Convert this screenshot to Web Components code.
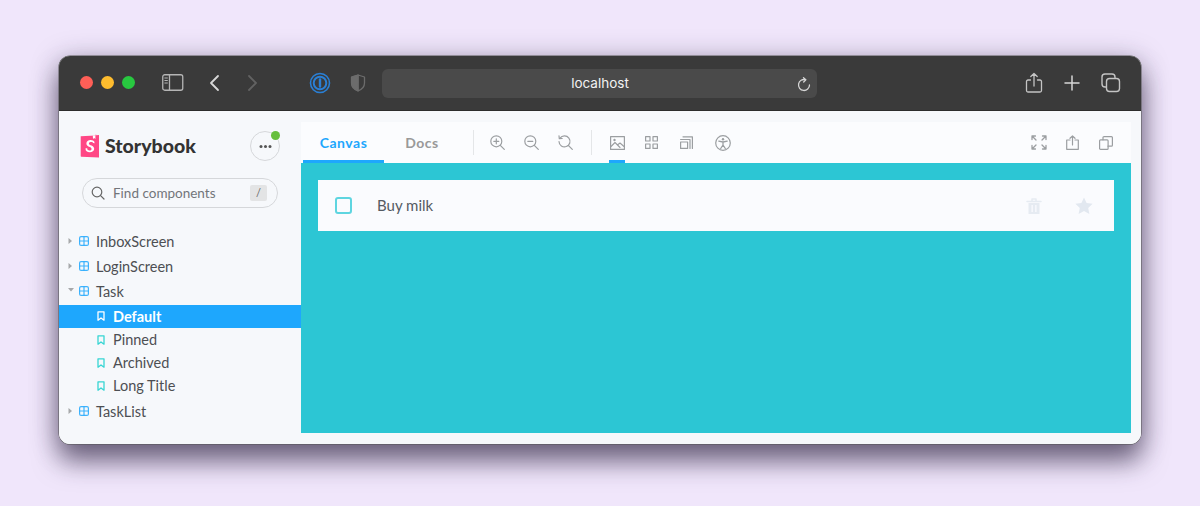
<!DOCTYPE html>
<html lang="en"><head><meta charset="utf-8"><title>Storybook</title>
<style>
html,body{margin:0;height:506px;overflow:hidden}
body{background:#f0e6fb;font-family:Lato,"Open Sans","Liberation Sans",sans-serif;padding:56px 59px 0;box-sizing:border-box}
</style></head><body>
<browser-window>
  <browser-bar slot="bar"></browser-bar>
  <sb-sidebar slot="side"></sb-sidebar>
  <sb-main slot="main"></sb-main>
</browser-window>
<script>
function el(name,css,html){
  customElements.define(name,class extends HTMLElement{
    constructor(){super();this.attachShadow({mode:'open'}).innerHTML='<style>'+css+'</style>'+(typeof html==='function'?html(this):html);}
  });
}
const I=(w,h,vb,body,extra='')=>`<svg width="${w}" height="${h}" viewBox="${vb}" fill="none" stroke-linecap="round" stroke-linejoin="round" ${extra}>${body}</svg>`;

el('browser-window',`
:host{display:block;width:1082px;height:388px;border-radius:11px;overflow:hidden;background:#f6f8fb;
 box-shadow:0 0 0 .5px #555,0 18px 26px rgba(40,30,60,.55),0 4px 28px rgba(40,30,60,.36)}
.b{display:flex;height:333px}
::slotted([slot=side]){flex:0 0 242px}
::slotted([slot=main]){flex:1}
`,`<slot name="bar"></slot><div class="b"><slot name="side"></slot><slot name="main"></slot></div>`);

el('browser-bar',`
:host{display:flex;align-items:center;height:55px;box-sizing:border-box;background:#3a3a3a;padding:0 20px 1px 21px;border-bottom:1px solid #2c2c2c}
.l{display:flex;gap:8px;margin-right:27px}
.l i{width:13px;height:13px;border-radius:50%;display:block}
svg{display:block;flex:none}
.url{width:436px;height:29px;border-radius:6px;background:#4a4a4a;display:flex;align-items:center;justify-content:center;position:relative;
 color:#f2f2f2;font:13.500px/31px Inter,"Liberation Sans",sans-serif;margin:1px 208px 0 16px}
.url svg{position:absolute;right:6px;top:8px}
`,`<div class="l"><i style="background:#ff5f57"></i><i style="background:#febc2e"></i><i style="background:#28c840"></i></div>
${I(22,17,'0 0 22 17','<rect x=".75" y=".75" width="20" height="15.500" rx="2" stroke="#b5b5b5" stroke-width="1.300"/><path d="M7.500 1v15" stroke="#b5b5b5" stroke-width="1.300"/><path d="M2.800 4h2.600M2.800 6.500h2.600M2.800 9h2.600" stroke="#b5b5b5" stroke-width="1"/>')}
${I(12,18,'0 0 12 18','<path d="M10 2 3 9l7 7" stroke="#d8d8d8" stroke-width="1.800"/>','style="margin-left:24px"')}
${I(12,18,'0 0 12 18','<path d="M2 2l7 7-7 7" stroke="#626262" stroke-width="1.800"/>','style="margin-left:27px"')}
${I(22,22,'0 0 22 22','<circle cx="11" cy="11" r="9.500" stroke="#2a7fd4" stroke-width="1.600"/><circle cx="11" cy="11" r="6.300" stroke="#2a7fd4" stroke-width="2"/><path d="M11 7.500v7" stroke="#2a7fd4" stroke-width="2.400"/>','style="margin-left:50px"')}
${I(16,18,'0 0 16 18','<path d="M8 1 1.500 3v6c0 4 3 6.700 6.500 8 3.500-1.300 6.500-4 6.500-8V3z" stroke="#6c6c6c" stroke-width="1.300"/><path d="M8 1 1.500 3v6c0 4 3 6.700 6.500 8z" fill="#6c6c6c" stroke="#6c6c6c"/>','style="margin-left:19px"')}
<div class="url"><span style="margin-left:1px">localhost</span>${I(14,15,'0 0 14 15','<path d="M8.500 2.700A5.500 5.500 0 1 0 12.500 8" stroke="#d5d5d5" stroke-width="1.300"/><path d="M6.500 .8 8.800 2.800 6.700 5" stroke="#d5d5d5" stroke-width="1.300"/>')}</div>
${I(18,22,'0 0 18 22','<path d="M5.500 8H3a1.500 1.500 0 0 0-1.500 1.500v9A1.500 1.500 0 0 0 3 20h12a1.500 1.500 0 0 0 1.500-1.500v-9A1.500 1.500 0 0 0 15 8h-2.500M9 14V1.500M5.800 4.500 9 1.500l3.200 3" stroke="#c4c4c4" stroke-width="1.300"/>')}
${I(16,16,'0 0 16 16','<path d="M8 1v14M1 8h14" stroke="#d6d6d6" stroke-width="1.500"/>','style="margin-left:21px"')}
${I(20,20,'0 0 20 20','<rect x="1" y="1" width="13" height="13" rx="3" stroke="#c4c4c4" stroke-width="1.400"/><rect x="5.500" y="5.500" width="13" height="13" rx="3" fill="#3a3a3a" stroke="#c4c4c4" stroke-width="1.400"/>','style="margin-left:21px"')}
`);

el('sb-sidebar',`
:host{display:block;box-sizing:border-box;padding:20px 0 0;background:#f6f8fb;color:#4d4f53}
.top{display:flex;align-items:center;padding:0 21px 0 21px;height:30px}
.brand{font:900 19.500px/30px Lato,sans-serif;color:#333;margin-left:6px}
.menu{margin-left:auto;width:30px;height:30px;box-sizing:border-box;border:1px solid #d5d7da;border-radius:50%;position:relative;display:flex;align-items:center;justify-content:center}
.menu b{position:absolute;top:-1px;right:-1px;width:9px;height:9px;border-radius:50%;background:#66bf3c}
.search{margin:17px 23px 0;height:30px;box-sizing:border-box;border:1px solid #d5d7da;border-radius:15px;display:flex;align-items:center;padding:0 10px 0 8px;font-size:13.500px;color:#72757a;gap:8px}
.search kbd{margin-left:auto;width:17px;height:16px;background:#e3e4e5;border-radius:2px;font:11px/16px Lato,sans-serif;text-align:center;color:#666}
.tree{margin-top:20px;display:block}
`,`<div class="top">
${I(19,24,'0 0 19 24','<path d="M.7 2.300 15.500 1.400 16 0l.200 1.300L19 1.100V23.400L1.300 22.700a.7.700 0 0 1-.6-.7z" fill="#ff4785"/><path d="M13.200 9c0-1-1.900-1.200-2.700-1.100-1 .1-1.600.7-1.600 1.500 0 2.200 5.300 1.500 5.300 5.400 0 2.300-2 3.500-4.400 3.500-2.600 0-4.400-1.100-4.300-3.700.1-.4 1.700-.4 1.800 0 0 1.500.9 2 2.500 1.900 1.100-.1 1.800-.7 1.800-1.600 0-2.300-5.200-1.900-5.200-5.400 0-2.300 1.800-3.500 4.100-3.500 2.300 0 4.300.9 4.100 3.300z" fill="#fff"/><path d="M12.800 1.600 13 5l1.200-.9 1.200.9V1.400z" fill="#fff"/>','style="flex:none"')}
<span class="brand">Storybook</span>
<div class="menu">${I(13,3,'0 0 13 3','<circle cx="2" cy="1.500" r="1.500" fill="#555"/><circle cx="6.500" cy="1.500" r="1.500" fill="#555"/><circle cx="11" cy="1.500" r="1.500" fill="#555"/>')}<b></b></div></div>
<div class="search">${I(14,14,'0 0 14 14','<circle cx="6" cy="6" r="4.800" stroke="#666" stroke-width="1.200"/><path d="M9.600 9.600 13 13" stroke="#666" stroke-width="1.200"/>')}<span>Find components</span><kbd>/</kbd></div>
<div class="tree">
<tree-row kind="comp" arrow="r">InboxScreen</tree-row>
<tree-row kind="comp" arrow="r">LoginScreen</tree-row>
<tree-row kind="comp" arrow="d">Task</tree-row>
<tree-row kind="story" selected>Default</tree-row>
<tree-row kind="story">Pinned</tree-row>
<tree-row kind="story">Archived</tree-row>
<tree-row kind="story" last>Long Title</tree-row>
<tree-row kind="comp" arrow="r">TaskList</tree-row>
</div>`);

el('tree-row',`
:host{display:flex;align-items:center;height:25px;font-size:14.500px;color:#4d4f53;padding-left:9px;box-sizing:border-box}
:host([kind=comp]){padding-top:1px}
:host([kind=story]){height:23px;padding-left:38px}
:host([selected]){background:#1ea7fd;color:#fff;font-weight:700;margin-top:1.500px;margin-bottom:.500px}
:host([last]){margin-bottom:1px}
svg{display:block;flex:none}
`,h=>{
 const k=h.getAttribute('kind'),a=h.getAttribute('arrow'),s=h.hasAttribute('selected');
 if(k==='comp'){
  const ar=a==='d'?'<path d="M0 0h6L3 3.500z" fill="#a6a8aa"/>':'<path d="M.5 0 4 3 .5 6z" fill="#a6a8aa"/>';
  return `${I(6,6,'0 0 6 6',ar)}${I(10,10,'0 0 10 10','<rect x=".6" y=".6" width="8.800" height="8.800" rx="1.500" stroke="#1ea7fd" stroke-width="1.200" opacity=".85"/><path d="M5 1v8M1 5h8" stroke="#1ea7fd" stroke-width="1.200" opacity=".85"/>','style="margin-left:5px;margin-right:7px"')}<slot></slot>`;
 }
 return `${I(8,10,'0 0 8 10',`<path d="M1 .8h6v8.400L4 7 1 9.200z" stroke="${s?'#fff':'#37d5d3'}" stroke-width="1.300"/>`,'style="margin-right:8px"')}<slot></slot>`;
});

el('sb-main',`
:host{display:flex;flex-direction:column;box-sizing:border-box;padding:11px 10px 11px 0;background:#f6f8fb}
`,`<sb-toolbar></sb-toolbar><div style="flex:1;background:#2cc6d4;padding:17px;display:block"><sb-task>Buy milk</sb-task></div>`);

const S='#9b9ea1';
el('sb-toolbar',`
:host{display:flex;align-items:center;height:41px;flex:none;background:#fbfcfe;position:relative}
.tab{font:700 14px/41px Lato,sans-serif;color:#999;text-align:center;position:relative;letter-spacing:.5px}
.c{width:81px;margin-left:2px;color:#1ea7fd}
.c::after,.u::after{content:"";position:absolute;left:0;right:0;bottom:0;height:3px;background:#1ea7fd}
.d{margin-left:21px;width:34px}
.sep{width:1px;height:25px;background:#e4e6e8;flex:none}
.ic{width:34px;display:flex;justify-content:center;height:41px;align-items:center;flex:none;position:relative}
.u::after{left:9px;right:9px}
svg{display:block}
.r{margin-left:auto;display:flex;margin-right:8px}
.r .ic{width:33.500px}
`,`<div class="tab c">Canvas</div><div class="tab d">Docs</div><div class="sep" style="margin-left:34px"></div>
<div class="ic" style="margin-left:6px">${I(15,15,'0 0 15 15',`<circle cx="6.300" cy="6.300" r="5.500" stroke="${S}" stroke-width="1.200"/><path d="M10.300 10.300 14.300 14.300M3.800 6.300h5M6.300 3.800v5" stroke="${S}" stroke-width="1.200"/>`)}</div>
<div class="ic">${I(15,15,'0 0 15 15',`<circle cx="6.300" cy="6.300" r="5.500" stroke="${S}" stroke-width="1.200"/><path d="M10.300 10.300 14.300 14.300M3.800 6.300h5" stroke="${S}" stroke-width="1.200"/>`)}</div>
<div class="ic">${I(15,15,'0 0 15 15',`<path d="M2 3.200A5.500 5.500 0 1 1 1 6.500" stroke="${S}" stroke-width="1.200"/><path d="M1 .8 1.300 3.700 4.200 3.500M10.300 10.300 14.300 14.300" stroke="${S}" stroke-width="1.200"/>`)}</div>
<div class="sep" style="margin-left:9px"></div>
<div class="ic u" style="margin-left:8px">${I(15,14,'0 0 15 14',`<rect x=".6" y=".6" width="13.800" height="12.800" stroke="${S}" stroke-width="1.200"/><path d="M1 10.500 5 6.500l5 5M8 8.500l2-1.500 4 3.500" stroke="${S}" stroke-width="1.100"/><circle cx="4.500" cy="4" r="1.200" fill="${S}"/>`)}</div>
<div class="ic">${I(13,13,'0 0 13 13',`<rect x=".6" y=".6" width="4.400" height="4.400" stroke="${S}" stroke-width="1.200"/><rect x="8" y=".6" width="4.400" height="4.400" stroke="${S}" stroke-width="1.200"/><rect x=".6" y="8" width="4.400" height="4.400" stroke="${S}" stroke-width="1.200"/><rect x="8" y="8" width="4.400" height="4.400" stroke="${S}" stroke-width="1.200"/>`)}</div>
<div class="ic" style="margin-left:1px">${I(13,13,'0 0 13 13',`<rect x=".6" y="6" width="7" height="6.400" stroke="${S}" stroke-width="1.200"/><path d="M.6 3.500h9.400v9M3 .8h9.400v11.700" stroke="${S}" stroke-width="1.200"/>`)}</div>
<div class="ic" style="margin-left:3px">${I(16,16,'0 0 16 16',`<circle cx="8" cy="8" r="7.300" stroke="${S}" stroke-width="1.200"/><circle cx="8" cy="4.300" r="1.200" fill="${S}"/><path d="M3.800 6.200 8 7l4.200-.8M8 7v3M8 10l-2.300 3.500M8 10l2.300 3.500" stroke="${S}" stroke-width="1.300"/>`)}</div>
<div class="r">
<div class="ic">${I(16,15,'0 0 16 15',`<path d="M1 1h3.500M1 1v3.500M1 1l4 4M15 1h-3.500M15 1v3.500M15 1l-4 4M1 14h3.500M1 14v-3.500M1 14l4-4M15 14h-3.500M15 14v-3.500M15 14l-4-4" stroke="${S}" stroke-width="1.300"/>`)}</div>
<div class="ic">${I(13,15,'0 0 13 15',`<path d="M4 5H.7v9.300h11.600V5H9M6.500 10V1M4 3.300 6.500 1 9 3.300" stroke="${S}" stroke-width="1.200"/>`)}</div>
<div class="ic">${I(14,14,'0 0 14 14',`<rect x=".6" y="3.800" width="8.500" height="9.600" rx="1" stroke="${S}" stroke-width="1.200"/><path d="M4 3.800V1.600a1 1 0 0 1 1-1h7.400a1 1 0 0 1 1 1v7.600a1 1 0 0 1-1 1H9" stroke="${S}" stroke-width="1.200"/>`)}</div>
</div>`);

el('sb-task',`
:host{display:flex;align-items:center;height:51px;background:#fafbfe;box-sizing:border-box;padding:0 21px 0 17px;font:15px/51px Lato,sans-serif;color:#555a62}
.cb{width:17px;height:17px;box-sizing:border-box;border:2px solid #5ed5e0;border-radius:3px;margin-right:25px;flex:none}
.a{margin-left:auto;display:flex;align-items:center;gap:33px}
svg{display:block}
`,`<div class="cb"></div><slot></slot><div class="a">
${I(16,18,'0 0 16 18','<path d="M1 4.500h14M6 4V2h4v2" stroke="#e6ebf2" stroke-width="1.500"/><path fill-rule="evenodd" d="M2.500 6h11v11h-11zM5.500 8v7h1.300V8zM9.200 8v7h1.300V8z" fill="#e6ebf2"/>')}
${I(18,17,'0 0 18 17','<path d="M9 .5l2.600 5.600 6 .7-4.400 4.100 1.200 6L9 14l-5.400 2.900 1.200-6L.4 6.800l6-.7z" fill="#e2e8f0"/>')}
</div>`);
</script>
</body></html>
